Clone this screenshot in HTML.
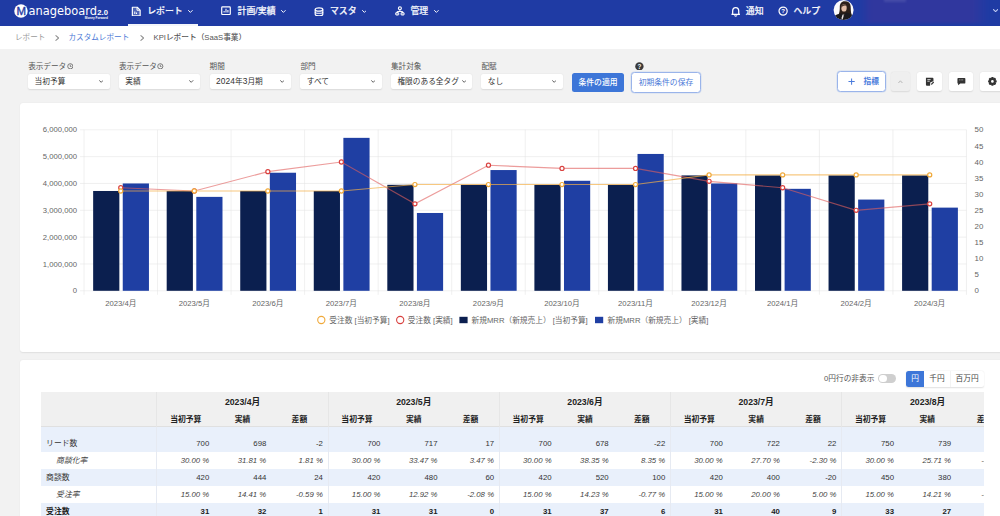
<!DOCTYPE html>
<html lang="ja">
<head>
<meta charset="utf-8">
<title>KPIレポート（SaaS事業）</title>
<style>
*{box-sizing:border-box;margin:0;padding:0}
html,body{width:1000px;height:516px;overflow:hidden;background:#f2f2f2;font-family:"Liberation Sans","Noto Sans CJK JP",sans-serif;color:#333}
.abs{position:absolute}
#hdr{position:absolute;left:0;top:0;width:1000px;height:25.6px;background:#1f3ba4}
#hdr .nm{position:absolute;top:0;height:25.6px;line-height:22.6px;color:#fff;font-size:8.9px;font-weight:500;-webkit-text-stroke:0.18px #fff;color:#f3f5fc;white-space:nowrap}
#hdr svg{position:absolute}
#crumb{position:absolute;left:0;top:25.6px;width:1000px;height:23.2px;background:#fff;font-size:7.6px;line-height:23px;white-space:nowrap}
#crumb span{position:absolute;top:0}
.flabel{position:absolute;top:60.8px;font-size:7.6px;line-height:12px;color:#555;white-space:nowrap}
.sel{position:absolute;top:74px;height:14.6px;width:81.4px;background:#fff;border-radius:2px;box-shadow:0 0.5px 1.5px rgba(0,0,0,.10);font-size:7.7px;line-height:15.2px;padding-left:6.4px;color:#333;white-space:nowrap}
.sel svg{position:absolute;right:6.5px;top:6.2px}
.btn{position:absolute;border-radius:2.5px;font-size:7.8px;text-align:center;white-space:nowrap}
.ibtn{position:absolute;top:72px;height:19.4px;width:24.6px;background:#fff;border-radius:2.5px;box-shadow:0 0.5px 1.5px rgba(0,0,0,.10)}
.card{position:absolute;left:20px;width:1000px;background:#fff;border-radius:3px 0 0 3px;box-shadow:0 0.5px 1.5px rgba(0,0,0,.08)}
.chart{position:absolute;left:0;top:0}
.ax{font-family:"Liberation Sans","Noto Sans CJK JP",sans-serif;font-size:7.7px;fill:#666}
.lg{font-family:"Liberation Sans","Noto Sans CJK JP",sans-serif;font-size:7.7px;fill:#666}
#twrap{position:absolute;left:40.6px;top:391.8px;width:943px;height:130px;overflow:hidden}
table.kpi{border-collapse:collapse;table-layout:fixed;width:972.45px;font-size:7.8px;color:#333}
table.kpi th,table.kpi td{padding:0;white-space:nowrap;overflow:hidden}
table.kpi .c0{width:116.4px;text-align:left;padding-left:5.5px}
table.kpi th{background:#f0f0f0;font-weight:700;color:#222}
tr.h1 th{height:18.5px;text-align:center;border-left:1px solid #e6e6e6;font-size:8.7px;padding-bottom:0}
tr.h1 th.c0{border-left:none}
tr.h2 th{height:16.5px;text-align:center;width:57.07px;padding-bottom:0.6px}
tr.h2 th.g0{border-left:1px solid #e6e6e6}
thead{border-bottom:1px solid #e0e0e0}
tbody td{height:17.15px;text-align:right;padding-right:4.8px !important;border-left:0}
tbody td.g0{border-left:1px solid rgba(190,200,220,.38)}
tbody td.c0{text-align:left;padding-left:5.5px !important;padding-bottom:1.8px}
tr.sp td{height:7.7px;background:#e9f0fb}
tr.rn td{background:#e9f0fb}
tr.rb td{background:#e9f0fb;font-weight:700;color:#222}
tr.rp td{background:#fff;font-style:italic;color:#444}
tr.rp td.c0{padding-left:15.5px !important}
</style>
</head>
<body>
<!-- header -->
<div id="hdr">
  
<svg style="left:13px;top:3px" width="100" height="20" viewBox="13 3 100 20">
  <circle cx="21" cy="11" r="6.75" fill="#fff"/>
  <text x="0" y="0" transform="translate(21.2,14.75) scale(1.15,1)" text-anchor="middle" font-family="Liberation Sans,sans-serif" font-size="10" fill="#1f3ba4" stroke="#1f3ba4" stroke-width="0.3">M</text>
  <text x="28.5" y="14.85" font-family="DejaVu Sans,Liberation Sans,sans-serif" font-size="11.6" fill="#fff" textLength="68.4" lengthAdjust="spacingAndGlyphs">anageboard</text>
  <text x="97.3" y="14.5" font-family="Liberation Sans,sans-serif" font-size="7" font-weight="700" fill="#fff" textLength="10.6" lengthAdjust="spacingAndGlyphs">2.0</text>
  <text x="84.8" y="19" font-family="Liberation Sans,sans-serif" font-size="2.9" font-weight="700" fill="#fff" textLength="23" lengthAdjust="spacingAndGlyphs">Money Forward</text>
</svg>
  <svg style="left:131.3px;top:5.6px" width="10.4" height="10.9" viewBox="0 0 20 21"><path d="M2.6 2.4 H12 L17.6 8 V19 H2.6 Z" fill="rgba(255,255,255,.22)" stroke="#fff" stroke-width="2.3" stroke-linejoin="round"/><path d="M11.6 2.6 V8.2 H17.2" fill="none" stroke="#fff" stroke-width="1.9"/><path d="M7.3 15.5 V10.5 M10.6 15.5 V12.6" stroke="#fff" stroke-width="2"/></svg>
<div class="nm" style="left:147.2px">レポート</div>
<svg style="left:188.2px;top:9.9px" width="4.8" height="2.88" viewBox="0 0 10 6"><path d="M1 1 L5 5 L9 1" fill="none" stroke="#fff" stroke-width="2" stroke-linecap="round" stroke-linejoin="round"/></svg>
<div style="position:absolute;left:128px;top:24.3px;width:70px;height:1.6px;background:#fff;opacity:.95"></div>
<svg style="left:221.4px;top:6.1px" width="10" height="9.4" viewBox="0 0 21 19"><rect x="1.5" y="1.5" width="18" height="16" rx="1.6" fill="none" stroke="#fff" stroke-width="2.5"/><path d="M6.5 13.5 V10 M10.5 13.5 V5.5 M14.5 13.5 V8" stroke="#fff" stroke-width="2.2"/></svg>
<div class="nm" style="left:237.6px">計画/実績</div>
<svg style="left:280.8px;top:9.9px" width="4.8" height="2.88" viewBox="0 0 10 6"><path d="M1 1 L5 5 L9 1" fill="none" stroke="#fff" stroke-width="2" stroke-linecap="round" stroke-linejoin="round"/></svg>
<svg style="left:314.2px;top:6.6px" width="10" height="9.8" viewBox="0 0 20 19.6"><ellipse cx="10" cy="5" rx="7.6" ry="3.4" fill="none" stroke="#fff" stroke-width="2.4"/><path d="M2.4 5 V14.6 C2.4 19 17.6 19 17.6 14.6 V5" fill="none" stroke="#fff" stroke-width="2.4"/><path d="M2.4 9.8 C2.4 13.6 17.6 13.6 17.6 9.8" fill="none" stroke="#fff" stroke-width="2.2"/></svg>
<div class="nm" style="left:330px">マスタ</div>
<svg style="left:361.5px;top:9.9px" width="4.8" height="2.88" viewBox="0 0 10 6"><path d="M1 1 L5 5 L9 1" fill="none" stroke="#fff" stroke-width="2" stroke-linecap="round" stroke-linejoin="round"/></svg>
<svg style="left:395.2px;top:6.4px" width="9.8" height="9.6" viewBox="0 0 20 19.6"><circle cx="10" cy="4.6" r="3" fill="none" stroke="#fff" stroke-width="2.4"/><path d="M10 8 V11.2 M4.4 14 V11.2 H15.6 V14" fill="none" stroke="#fff" stroke-width="2"/><rect x="1.4" y="13.4" width="6.2" height="5" rx="1.2" fill="rgba(255,255,255,.45)" stroke="#fff" stroke-width="2"/><rect x="12.4" y="13.4" width="6.2" height="5" rx="1.2" fill="rgba(255,255,255,.45)" stroke="#fff" stroke-width="2"/></svg>
<div class="nm" style="left:410.4px">管理</div>
<svg style="left:434px;top:9.9px" width="4.8" height="2.88" viewBox="0 0 10 6"><path d="M1 1 L5 5 L9 1" fill="none" stroke="#fff" stroke-width="2" stroke-linecap="round" stroke-linejoin="round"/></svg>
<svg style="left:730.9px;top:6.4px" width="9.4" height="10.6" viewBox="0 0 18 21"><path d="M3 15 V10 C3 5.5 5.5 3 9 3 C12.5 3 15 5.5 15 10 V15 L16.5 16.5 H1.5 Z" fill="none" stroke="#fff" stroke-width="2.5" stroke-linejoin="round"/><path d="M6.6 18.6 C7.2 20.6 10.8 20.6 11.4 18.6" fill="none" stroke="#fff" stroke-width="2.2"/></svg>
<div class="nm" style="left:745.8px">通知</div>
<svg style="left:777.7px;top:6.3px" width="10.2" height="10.2" viewBox="0 0 20 20"><circle cx="10" cy="10" r="8" fill="none" stroke="#fff" stroke-width="2.4"/><text x="10" y="14.3" text-anchor="middle" font-family="Liberation Sans,sans-serif" font-weight="700" font-size="12" fill="#fff">?</text></svg>
<div class="nm" style="left:793.4px">ヘルプ</div>
<svg style="left:832px;top:0" width="24" height="22" viewBox="832 0 24 22">
<defs><clipPath id="av"><circle cx="843.6" cy="10.1" r="10"/></clipPath></defs>
<circle cx="843.6" cy="10.1" r="10" fill="#fbfbfd"/>
<g clip-path="url(#av)">
<path d="M845 1.2 C841.5 1 839.8 3.6 839.8 7 C839.8 10 839.6 12 838.6 14.4 L851.6 14.6 C850.6 12 850.9 9 850.6 6 C850.3 3 848.4 1.3 845 1.2 Z" fill="#2c201a"/>
<ellipse cx="844" cy="7.9" rx="2.7" ry="3.7" fill="#e3bda6"/>
<path d="M841.2 6.6 C842 4 845.5 3.4 847 6.2 C845.5 5.2 843 5.2 841.2 8 Z" fill="#4a362c"/>
<path d="M833 16.4 C836 14.4 839.5 13.6 842 13.2 L843.6 15 L846 12.6 C849 13 852 14.4 854.4 16.6 L852 22 H836 Z" fill="#1b1a1d"/>
<path d="M842.6 14.4 L843.8 15.4 L842.6 19.4 L841.4 18.2 Z" fill="#e9e4e4"/>
</g></svg>
<div style="position:absolute;left:860px;top:-3px;width:128px;height:26px;filter:blur(1.5px);background:linear-gradient(90deg,rgba(75,50,150,0) 0%,rgba(75,50,150,.38) 8%,rgba(75,50,150,.38) 88%,rgba(75,50,150,0) 100%)"></div>
<div style="position:absolute;left:884px;top:-2px;width:22px;height:3.6px;background:rgba(255,255,255,.10);filter:blur(1.2px)"></div>
<svg style="left:992.5px;top:8.7px" width="5.2" height="3.12" viewBox="0 0 10 6"><path d="M1 1 L5 5 L9 1" fill="none" stroke="#c3cdf3" stroke-width="2" stroke-linecap="round" stroke-linejoin="round"/></svg>
</div>
<div id="crumb">
  <span style="left:15px;color:#9a9a9a">レポート</span>
  <svg class="abs" style="left:54.6px;top:9.2px" width="4.8" height="6" viewBox="0 0 8 10"><path d="M1.5 1 L6 5 L1.5 9" fill="none" stroke="#8f8f8f" stroke-width="1.7" stroke-linecap="round" stroke-linejoin="round"/></svg>
  <span style="left:68.5px;color:#4a78d6">カスタムレポート</span>
  <svg class="abs" style="left:139.6px;top:9.2px" width="4.8" height="6" viewBox="0 0 8 10"><path d="M1.5 1 L6 5 L1.5 9" fill="none" stroke="#8f8f8f" stroke-width="1.7" stroke-linecap="round" stroke-linejoin="round"/></svg>
  <span style="left:153.5px;color:#555;font-weight:500;font-size:7.7px">KPIレポート（SaaS事業）</span>
</div>
<!-- filters -->
<div class="flabel" style="left:28.2px">表示データ<svg style="vertical-align:-0.6px;margin-left:0.6px" width="6.6" height="6.6" viewBox="0 0 14 14"><circle cx="7" cy="7" r="5.5" fill="none" stroke="#555" stroke-width="1.6"/><path d="M7 3.8 V7.4 H9.6" fill="none" stroke="#555" stroke-width="1.5"/></svg></div>
<div class="sel" style="left:28.2px">当初予算<svg width="4.4" height="2.9" viewBox="0 0 10 6"><path d="M1 1 L5 5 L9 1" fill="none" stroke="#5a5a5a" stroke-width="2.2" stroke-linecap="round" stroke-linejoin="round"/></svg></div>
<div class="flabel" style="left:118.9px">表示データ<svg style="vertical-align:-0.6px;margin-left:0.6px" width="6.6" height="6.6" viewBox="0 0 14 14"><circle cx="7" cy="7" r="5.5" fill="none" stroke="#555" stroke-width="1.6"/><path d="M7 3.8 V7.4 H9.6" fill="none" stroke="#555" stroke-width="1.5"/></svg></div>
<div class="sel" style="left:118.9px">実績<svg width="4.4" height="2.9" viewBox="0 0 10 6"><path d="M1 1 L5 5 L9 1" fill="none" stroke="#5a5a5a" stroke-width="2.2" stroke-linecap="round" stroke-linejoin="round"/></svg></div>
<div class="flabel" style="left:209.6px">期間</div>
<div class="sel" style="left:209.6px"><span style="font-size:8.4px;letter-spacing:.1px">2024</span>年<span style="font-size:8.4px">3</span>月期<svg width="4.4" height="2.9" viewBox="0 0 10 6"><path d="M1 1 L5 5 L9 1" fill="none" stroke="#5a5a5a" stroke-width="2.2" stroke-linecap="round" stroke-linejoin="round"/></svg></div>
<div class="flabel" style="left:300.4px">部門</div>
<div class="sel" style="left:300.4px">すべて<svg width="4.4" height="2.9" viewBox="0 0 10 6"><path d="M1 1 L5 5 L9 1" fill="none" stroke="#5a5a5a" stroke-width="2.2" stroke-linecap="round" stroke-linejoin="round"/></svg></div>
<div class="flabel" style="left:391px">集計対象</div>
<div class="sel" style="left:391px">権限のある全タグ<svg width="4.4" height="2.9" viewBox="0 0 10 6"><path d="M1 1 L5 5 L9 1" fill="none" stroke="#5a5a5a" stroke-width="2.2" stroke-linecap="round" stroke-linejoin="round"/></svg></div>
<div class="flabel" style="left:481.4px">配賦</div>
<div class="sel" style="left:481.4px">なし<svg width="4.4" height="2.9" viewBox="0 0 10 6"><path d="M1 1 L5 5 L9 1" fill="none" stroke="#5a5a5a" stroke-width="2.2" stroke-linecap="round" stroke-linejoin="round"/></svg></div>
<div class="btn" style="left:571.6px;top:73.2px;width:52.8px;height:19.2px;line-height:20.6px;background:#3d76d8;color:#fff;font-weight:500">条件の適用</div>
<svg class="abs" style="left:635.1px;top:61.5px" width="8.8" height="8.8" viewBox="0 0 16 16"><circle cx="8" cy="8" r="7.6" fill="#3a3a3a"/><text x="8" y="12.2" text-anchor="middle" font-family="Liberation Sans,sans-serif" font-weight="700" font-size="11.5" fill="#fff">?</text></svg>
<div class="btn" style="left:631.2px;top:72.2px;width:69.6px;height:20.4px;line-height:20.4px;background:#fff;color:#4a7ad8;border-radius:3.5px;border:1px solid #9ab4ea;box-shadow:0 0 0 0.5px rgba(130,165,235,.3)">初期条件の保存</div>
<div class="btn" style="left:837.2px;top:71.4px;width:48.8px;height:20.4px;line-height:20.2px;background:#fff;color:#4a7bdc;border-radius:3.5px;border:1px solid #9ab4ea;box-shadow:0 0 0 0.5px rgba(130,165,235,.3);font-weight:700"><svg class="abs" style="left:9.6px;top:5.6px" width="7.2" height="7.2" viewBox="0 0 12 12"><path d="M6 0.8 V11.2 M0.8 6 H11.2" stroke="#4a7bdc" stroke-width="1.7"/></svg><span style="position:absolute;left:25.4px;top:-0.4px;font-size:7.7px">指標</span></div>
<div class="ibtn" style="left:891.4px;width:18.8px;background:#efefef;box-shadow:0 0.5px 1.5px rgba(0,0,0,.10)"><svg class="abs" style="left:7px;top:7.6px" width="4.8" height="3.6" viewBox="0 0 12 8"><path d="M1.5 6.5 L6 1.5 L10.5 6.5" fill="none" stroke="#aaa" stroke-width="2" stroke-linecap="round" stroke-linejoin="round"/></svg></div>
<div class="ibtn" style="left:917.4px"><svg class="abs" style="left:7.6px;top:5.4px" width="9.4" height="9.4" viewBox="0 0 20 20"><path d="M2 1.5 H16 Q18 1.5 18 3.5 V9 L11.5 11 L10.5 18.5 H4 Q2 18.5 2 16.5 Z" fill="#333"/><path d="M5 5.5 H12 M5 9 H10" stroke="#fff" stroke-width="1.6"/><path d="M12 17.5 L12.6 14.2 L17.6 9.2 L20 11.6 L15 16.6 Z" fill="#333" stroke="#fff" stroke-width="0.9"/></svg></div>
<div class="ibtn" style="left:948.6px"><svg class="abs" style="left:8.2px;top:5.2px" width="8.8" height="8.8" viewBox="0 0 20 20"><path d="M3 2 H17 Q19 2 19 4 V13 Q19 15 17 15 H7.5 L2.5 19 V15 Q1 15 1 13 V4 Q1 2 3 2 Z" fill="#333"/><path d="M5 6.6 H15" stroke="#fff" stroke-width="1.3" stroke-dasharray="2.2 1.2"/></svg></div>
<div class="ibtn" style="left:980px;width:26px"><svg class="abs" style="left:8px;top:5.1px" width="8.8" height="8.8" viewBox="-10 -10 20 20"><g fill="#333"><rect x="-2.6" y="-9.8" width="5.2" height="5" rx="1" transform="rotate(0)"/><rect x="-2.6" y="-9.8" width="5.2" height="5" rx="1" transform="rotate(45)"/><rect x="-2.6" y="-9.8" width="5.2" height="5" rx="1" transform="rotate(90)"/><rect x="-2.6" y="-9.8" width="5.2" height="5" rx="1" transform="rotate(135)"/><rect x="-2.6" y="-9.8" width="5.2" height="5" rx="1" transform="rotate(180)"/><rect x="-2.6" y="-9.8" width="5.2" height="5" rx="1" transform="rotate(225)"/><rect x="-2.6" y="-9.8" width="5.2" height="5" rx="1" transform="rotate(270)"/><rect x="-2.6" y="-9.8" width="5.2" height="5" rx="1" transform="rotate(315)"/></g><circle r="5.4" fill="none" stroke="#333" stroke-width="4.6"/></svg></div>
<!-- chart card -->
<div class="card" style="top:103px;height:248.7px">
<svg class="chart" width="980" height="249" viewBox="20 103 980 249">
<line x1="80" x2="966.5" y1="290.80" y2="290.80" stroke="#e4e4e4" stroke-width="0.55"/>
<line x1="80" x2="966.5" y1="263.97" y2="263.97" stroke="#e4e4e4" stroke-width="0.55"/>
<line x1="80" x2="966.5" y1="237.13" y2="237.13" stroke="#e4e4e4" stroke-width="0.55"/>
<line x1="80" x2="966.5" y1="210.30" y2="210.30" stroke="#e4e4e4" stroke-width="0.55"/>
<line x1="80" x2="966.5" y1="183.47" y2="183.47" stroke="#e4e4e4" stroke-width="0.55"/>
<line x1="80" x2="966.5" y1="156.63" y2="156.63" stroke="#e4e4e4" stroke-width="0.55"/>
<line x1="80" x2="966.5" y1="129.80" y2="129.80" stroke="#e4e4e4" stroke-width="0.55"/>
<line x1="84.00" x2="84.00" y1="129.8" y2="294.8" stroke="#e4e4e4" stroke-width="0.55"/>
<line x1="157.54" x2="157.54" y1="129.8" y2="294.8" stroke="#e4e4e4" stroke-width="0.55"/>
<line x1="231.08" x2="231.08" y1="129.8" y2="294.8" stroke="#e4e4e4" stroke-width="0.55"/>
<line x1="304.62" x2="304.62" y1="129.8" y2="294.8" stroke="#e4e4e4" stroke-width="0.55"/>
<line x1="378.16" x2="378.16" y1="129.8" y2="294.8" stroke="#e4e4e4" stroke-width="0.55"/>
<line x1="451.70" x2="451.70" y1="129.8" y2="294.8" stroke="#e4e4e4" stroke-width="0.55"/>
<line x1="525.24" x2="525.24" y1="129.8" y2="294.8" stroke="#e4e4e4" stroke-width="0.55"/>
<line x1="598.78" x2="598.78" y1="129.8" y2="294.8" stroke="#e4e4e4" stroke-width="0.55"/>
<line x1="672.32" x2="672.32" y1="129.8" y2="294.8" stroke="#e4e4e4" stroke-width="0.55"/>
<line x1="745.86" x2="745.86" y1="129.8" y2="294.8" stroke="#e4e4e4" stroke-width="0.55"/>
<line x1="819.40" x2="819.40" y1="129.8" y2="294.8" stroke="#e4e4e4" stroke-width="0.55"/>
<line x1="892.94" x2="892.94" y1="129.8" y2="294.8" stroke="#e4e4e4" stroke-width="0.55"/>
<line x1="966.48" x2="966.48" y1="129.8" y2="294.8" stroke="#e4e4e4" stroke-width="0.55"/>
<rect x="93.15" y="190.98" width="26.2" height="99.82" fill="#0b1f4f"/>
<rect x="122.75" y="183.47" width="26.2" height="107.33" fill="#1f3fa3"/>
<rect x="166.69" y="190.98" width="26.2" height="99.82" fill="#0b1f4f"/>
<rect x="196.29" y="196.88" width="26.2" height="93.92" fill="#1f3fa3"/>
<rect x="240.23" y="190.98" width="26.2" height="99.82" fill="#0b1f4f"/>
<rect x="269.83" y="172.73" width="26.2" height="118.07" fill="#1f3fa3"/>
<rect x="313.77" y="190.98" width="26.2" height="99.82" fill="#0b1f4f"/>
<rect x="343.37" y="137.85" width="26.2" height="152.95" fill="#1f3fa3"/>
<rect x="387.31" y="184.81" width="26.2" height="105.99" fill="#0b1f4f"/>
<rect x="416.91" y="212.98" width="26.2" height="77.82" fill="#1f3fa3"/>
<rect x="460.85" y="184.81" width="26.2" height="105.99" fill="#0b1f4f"/>
<rect x="490.45" y="170.05" width="26.2" height="120.75" fill="#1f3fa3"/>
<rect x="534.39" y="184.81" width="26.2" height="105.99" fill="#0b1f4f"/>
<rect x="563.99" y="180.78" width="26.2" height="110.02" fill="#1f3fa3"/>
<rect x="607.93" y="184.81" width="26.2" height="105.99" fill="#0b1f4f"/>
<rect x="637.53" y="153.95" width="26.2" height="136.85" fill="#1f3fa3"/>
<rect x="681.47" y="175.42" width="26.2" height="115.38" fill="#0b1f4f"/>
<rect x="711.07" y="183.47" width="26.2" height="107.33" fill="#1f3fa3"/>
<rect x="755.01" y="175.42" width="26.2" height="115.38" fill="#0b1f4f"/>
<rect x="784.61" y="188.83" width="26.2" height="101.97" fill="#1f3fa3"/>
<rect x="828.55" y="175.42" width="26.2" height="115.38" fill="#0b1f4f"/>
<rect x="858.15" y="199.57" width="26.2" height="91.23" fill="#1f3fa3"/>
<rect x="902.09" y="175.42" width="26.2" height="115.38" fill="#0b1f4f"/>
<rect x="931.69" y="207.62" width="26.2" height="83.18" fill="#1f3fa3"/>
<polyline points="120.77,187.76 194.31,190.98 267.85,171.66 341.39,162.00 414.93,203.86 488.47,165.22 562.01,168.44 635.55,168.44 709.09,181.32 782.63,187.76 856.17,210.30 929.71,203.86" fill="none" stroke="#e0605e" stroke-width="1.15" opacity="0.62"/>
<circle cx="120.77" cy="187.76" r="2.05" fill="#fff" stroke="#d9413f" stroke-width="1.2"/>
<circle cx="194.31" cy="190.98" r="2.05" fill="#fff" stroke="#d9413f" stroke-width="1.2"/>
<circle cx="267.85" cy="171.66" r="2.05" fill="#fff" stroke="#d9413f" stroke-width="1.2"/>
<circle cx="341.39" cy="162.00" r="2.05" fill="#fff" stroke="#d9413f" stroke-width="1.2"/>
<circle cx="414.93" cy="203.86" r="2.05" fill="#fff" stroke="#d9413f" stroke-width="1.2"/>
<circle cx="488.47" cy="165.22" r="2.05" fill="#fff" stroke="#d9413f" stroke-width="1.2"/>
<circle cx="562.01" cy="168.44" r="2.05" fill="#fff" stroke="#d9413f" stroke-width="1.2"/>
<circle cx="635.55" cy="168.44" r="2.05" fill="#fff" stroke="#d9413f" stroke-width="1.2"/>
<circle cx="709.09" cy="181.32" r="2.05" fill="#fff" stroke="#d9413f" stroke-width="1.2"/>
<circle cx="782.63" cy="187.76" r="2.05" fill="#fff" stroke="#d9413f" stroke-width="1.2"/>
<circle cx="856.17" cy="210.30" r="2.05" fill="#fff" stroke="#d9413f" stroke-width="1.2"/>
<circle cx="929.71" cy="203.86" r="2.05" fill="#fff" stroke="#d9413f" stroke-width="1.2"/>
<polyline points="120.77,190.98 194.31,190.98 267.85,190.98 341.39,190.98 414.93,184.54 488.47,184.54 562.01,184.54 635.55,184.54 709.09,174.88 782.63,174.88 856.17,174.88 929.71,174.88" fill="none" stroke="#f3b14a" stroke-width="1.15" opacity="0.7"/>
<circle cx="120.77" cy="190.98" r="2.05" fill="#fff" stroke="#f0a93a" stroke-width="1.2"/>
<circle cx="194.31" cy="190.98" r="2.05" fill="#fff" stroke="#f0a93a" stroke-width="1.2"/>
<circle cx="267.85" cy="190.98" r="2.05" fill="#fff" stroke="#f0a93a" stroke-width="1.2"/>
<circle cx="341.39" cy="190.98" r="2.05" fill="#fff" stroke="#f0a93a" stroke-width="1.2"/>
<circle cx="414.93" cy="184.54" r="2.05" fill="#fff" stroke="#f0a93a" stroke-width="1.2"/>
<circle cx="488.47" cy="184.54" r="2.05" fill="#fff" stroke="#f0a93a" stroke-width="1.2"/>
<circle cx="562.01" cy="184.54" r="2.05" fill="#fff" stroke="#f0a93a" stroke-width="1.2"/>
<circle cx="635.55" cy="184.54" r="2.05" fill="#fff" stroke="#f0a93a" stroke-width="1.2"/>
<circle cx="709.09" cy="174.88" r="2.05" fill="#fff" stroke="#f0a93a" stroke-width="1.2"/>
<circle cx="782.63" cy="174.88" r="2.05" fill="#fff" stroke="#f0a93a" stroke-width="1.2"/>
<circle cx="856.17" cy="174.88" r="2.05" fill="#fff" stroke="#f0a93a" stroke-width="1.2"/>
<circle cx="929.71" cy="174.88" r="2.05" fill="#fff" stroke="#f0a93a" stroke-width="1.2"/>
<text x="77" y="293.40" text-anchor="end" class="ax">0</text>
<text x="77" y="266.57" text-anchor="end" class="ax">1,000,000</text>
<text x="77" y="239.73" text-anchor="end" class="ax">2,000,000</text>
<text x="77" y="212.90" text-anchor="end" class="ax">3,000,000</text>
<text x="77" y="186.07" text-anchor="end" class="ax">4,000,000</text>
<text x="77" y="159.23" text-anchor="end" class="ax">5,000,000</text>
<text x="77" y="132.40" text-anchor="end" class="ax">6,000,000</text>
<text x="974.5" y="293.40" class="ax" style="font-size:7.9px">0</text>
<text x="974.5" y="277.30" class="ax" style="font-size:7.9px">5</text>
<text x="974.5" y="261.20" class="ax" style="font-size:7.9px">10</text>
<text x="974.5" y="245.10" class="ax" style="font-size:7.9px">15</text>
<text x="974.5" y="229.00" class="ax" style="font-size:7.9px">20</text>
<text x="974.5" y="212.90" class="ax" style="font-size:7.9px">25</text>
<text x="974.5" y="196.80" class="ax" style="font-size:7.9px">30</text>
<text x="974.5" y="180.70" class="ax" style="font-size:7.9px">35</text>
<text x="974.5" y="164.60" class="ax" style="font-size:7.9px">40</text>
<text x="974.5" y="148.50" class="ax" style="font-size:7.9px">45</text>
<text x="974.5" y="132.40" class="ax" style="font-size:7.9px">50</text>
<text x="120.77" y="305.5" text-anchor="middle" class="ax">2023/4月</text>
<text x="194.31" y="305.5" text-anchor="middle" class="ax">2023/5月</text>
<text x="267.85" y="305.5" text-anchor="middle" class="ax">2023/6月</text>
<text x="341.39" y="305.5" text-anchor="middle" class="ax">2023/7月</text>
<text x="414.93" y="305.5" text-anchor="middle" class="ax">2023/8月</text>
<text x="488.47" y="305.5" text-anchor="middle" class="ax">2023/9月</text>
<text x="562.01" y="305.5" text-anchor="middle" class="ax">2023/10月</text>
<text x="635.55" y="305.5" text-anchor="middle" class="ax">2023/11月</text>
<text x="709.09" y="305.5" text-anchor="middle" class="ax">2023/12月</text>
<text x="782.63" y="305.5" text-anchor="middle" class="ax">2024/1月</text>
<text x="856.17" y="305.5" text-anchor="middle" class="ax">2024/2月</text>
<text x="929.71" y="305.5" text-anchor="middle" class="ax">2024/3月</text>
<circle cx="321.3" cy="320" r="3.6" fill="#fff" stroke="#f0a93a" stroke-width="1.1"/>
<text x="329.3" y="322.8" class="lg">受注数 [当初予算]</text>
<circle cx="400.2" cy="320" r="3.6" fill="#fff" stroke="#d9413f" stroke-width="1.1"/>
<text x="407.8" y="322.8" class="lg">受注数 [実績]</text>
<rect x="459.4" y="316.8" width="8.2" height="6.4" fill="#0b1f4f"/>
<text x="471.6" y="322.8" class="lg">新規MRR（新規売上） [当初予算]</text>
<rect x="595" y="316.8" width="8.2" height="6.4" fill="#1f3fa3"/>
<text x="607.6" y="322.8" class="lg">新規MRR（新規売上） [実績]</text>
</svg>
</div>
<!-- table card -->
<div class="card" style="top:360px;height:170px"></div>
<div class="abs" style="left:824px;top:372.6px;font-size:7.7px;line-height:12px;color:#555;white-space:nowrap">0円行の非表示</div>
<div class="abs" style="left:878px;top:373.7px;width:18px;height:9.6px;border-radius:4.8px;background:#cfcfcf"><div class="abs" style="left:0.9px;top:0.9px;width:7.8px;height:7.8px;border-radius:50%;background:#fff"></div></div>
<div class="abs" style="left:905.6px;top:371px;width:78px;height:16px;background:#fff;border-radius:2.5px;box-shadow:0 0.5px 1.5px rgba(0,0,0,.12)"></div>
<div class="abs" style="left:905.6px;top:371px;width:18.8px;height:16px;background:#3d76d8;border-radius:2.5px 0 0 2.5px;color:#fff;font-size:7.7px;line-height:15.6px;text-align:center">円</div>
<div class="abs" style="left:924.4px;top:371px;width:25.2px;height:16px;color:#444;font-size:7.7px;line-height:15.6px;text-align:center">千円</div>
<div class="abs" style="left:949.6px;top:371px;width:34px;height:16px;color:#444;font-size:7.7px;line-height:15.6px;text-align:center;border-left:0.6px solid #f3f3f3">百万円</div>
<div id="twrap">
<table class="kpi"><thead>
<tr class="h1"><th class="c0" rowspan="2"></th><th colspan="3" class="mh">2023/4月</th><th colspan="3" class="mh">2023/5月</th><th colspan="3" class="mh">2023/6月</th><th colspan="3" class="mh">2023/7月</th><th colspan="3" class="mh">2023/8月</th></tr>
<tr class="h2"><th class="g0">当初予算</th><th>実績</th><th>差額</th><th class="g0">当初予算</th><th>実績</th><th>差額</th><th class="g0">当初予算</th><th>実績</th><th>差額</th><th class="g0">当初予算</th><th>実績</th><th>差額</th><th class="g0">当初予算</th><th>実績</th><th>差額</th></tr>
</thead><tbody>
<tr class="sp"><td class="c0"></td><td class="g0"></td><td></td><td></td><td class="g0"></td><td></td><td></td><td class="g0"></td><td></td><td></td><td class="g0"></td><td></td><td></td><td class="g0"></td><td></td><td></td></tr>
<tr class="rn"><td class="c0">リード数</td><td class="g0">700</td><td>698</td><td>-2</td><td class="g0">700</td><td>717</td><td>17</td><td class="g0">700</td><td>678</td><td>-22</td><td class="g0">700</td><td>722</td><td>22</td><td class="g0">750</td><td>739</td><td>-11</td></tr>
<tr class="rp"><td class="c0">商談化率</td><td class="g0">30.00 %</td><td>31.81 %</td><td>1.81 %</td><td class="g0">30.00 %</td><td>33.47 %</td><td>3.47 %</td><td class="g0">30.00 %</td><td>38.35 %</td><td>8.35 %</td><td class="g0">30.00 %</td><td>27.70 %</td><td>-2.30 %</td><td class="g0">30.00 %</td><td>25.71 %</td><td>-4.29 %</td></tr>
<tr class="rn"><td class="c0">商談数</td><td class="g0">420</td><td>444</td><td>24</td><td class="g0">420</td><td>480</td><td>60</td><td class="g0">420</td><td>520</td><td>100</td><td class="g0">420</td><td>400</td><td>-20</td><td class="g0">450</td><td>380</td><td>-70</td></tr>
<tr class="rp"><td class="c0">受注率</td><td class="g0">15.00 %</td><td>14.41 %</td><td>-0.59 %</td><td class="g0">15.00 %</td><td>12.92 %</td><td>-2.08 %</td><td class="g0">15.00 %</td><td>14.23 %</td><td>-0.77 %</td><td class="g0">15.00 %</td><td>20.00 %</td><td>5.00 %</td><td class="g0">15.00 %</td><td>14.21 %</td><td>-0.79 %</td></tr>
<tr class="rb"><td class="c0">受注数</td><td class="g0">31</td><td>32</td><td>1</td><td class="g0">31</td><td>31</td><td>0</td><td class="g0">31</td><td>37</td><td>6</td><td class="g0">31</td><td>40</td><td>9</td><td class="g0">33</td><td>27</td><td>-6</td></tr>
</tbody></table>
</div>
</body>
</html>
